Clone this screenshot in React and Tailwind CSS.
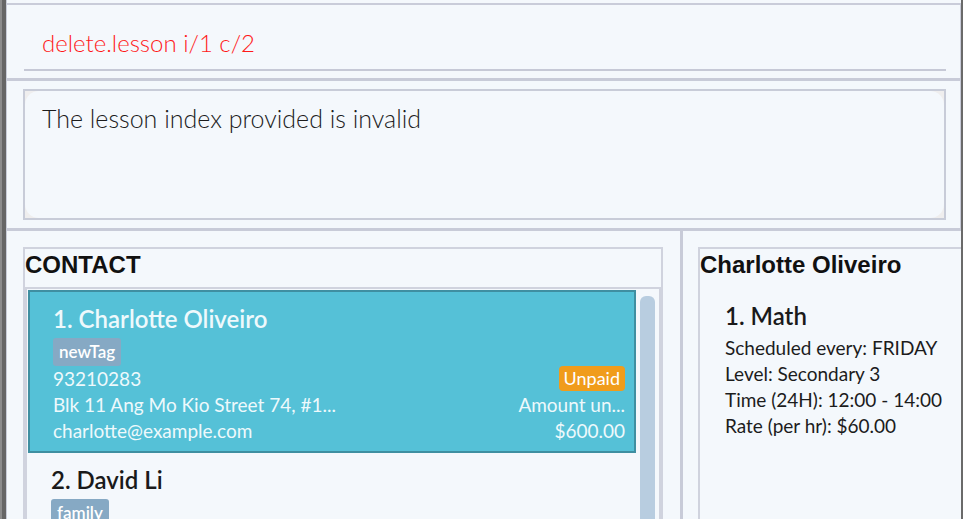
export default function App() {
  return (
    <div className="w-[963px] h-[519px] overflow-hidden flex bg-[#f4f8fc] font-['Lato',sans-serif] text-[#1c1c1c]">
      <div className="w-[6px] shrink-0 border-l-2 border-[#8c8c8c] bg-[#666666]" />

      <div className="flex-1 min-w-0 flex flex-col border-l border-[#c8ccd8]">
        <div className="h-[3px] shrink-0" />

        {/* command box */}
        <div className="shrink-0 border-t-2 border-r border-[#c9ccd9] pl-[17px] pr-[14px] pb-[7px]">
          <div className="h-[66px] pt-[11px] pl-[18px] flex items-center border-b-2 border-[#c6c9d6] text-[24px] font-light text-[#ff1a1a]">
            delete.lesson i/1 c/2
          </div>
        </div>

        {/* result box */}
        <div className="shrink-0 border-t-[3px] border-r border-[#c8cbd8] pl-[16px] pr-[14px] pt-[8px] pb-[8px]">
          <div className="h-[131px] border-2 border-[#c8ccd8] bg-[#efeeee]">
            <div className="h-full rounded-[14px] bg-[#f4f8fc] pl-[17px] pt-[11px] text-[25px] leading-[32px] font-light">
              The lesson index provided is invalid
            </div>
          </div>
        </div>

        {/* panels */}
        <div className="flex-1 min-h-0 flex border-t-[3px] border-[#c8cbd8]">
          <div className="w-[673px] shrink-0 pl-[16px] pr-[17px] pt-[16px] overflow-hidden">
            <div className="h-[400px] border-2 border-[#d0d3de] flex flex-col">
              <div className="pt-[2px] leading-[28px] h-[38px] text-[24px] font-bold font-['Liberation_Sans',sans-serif] text-[#111]">
                CONTACT
              </div>
              <div className="flex-1 border-2 border-[#d0d3de] flex pl-[1px] pt-[1px]">
                <div className="flex-1 min-w-0 flex flex-col">
                  <div className="border-2 border-[#3f8fa1] bg-[#55c1d7] pl-[23px] pr-[9px] pt-[12px] pb-[7px] flex text-[#eef9fc]">
                    <div className="flex-1 min-w-0 flex flex-col items-start">
                      <div className="h-[30px] leading-[30px] text-[24px] font-semibold">1. Charlotte Oliveiro</div>
                      <div className="mt-[4px] h-[28px] leading-[28px] px-[6px] rounded-[3px] bg-[#86a9c4] text-white text-[17px] font-semibold">newTag</div>
                      <div className="leading-[26px] text-[19px]">93210283</div>
                      <div className="leading-[26px] text-[19px]">Blk 11 Ang Mo Kio Street 74, #1...</div>
                      <div className="leading-[26px] text-[19px]">charlotte@example.com</div>
                    </div>
                    <div className="flex flex-col items-end justify-end">
                      <div className="h-[25px] mb-[1px] leading-[25px] px-[5px] rounded-[4px] bg-[#f09c1b] text-white text-[18px]">Unpaid</div>
                      <div className="leading-[26px] text-[19px]">Amount un...</div>
                      <div className="leading-[26px] text-[19px]">$600.00</div>
                    </div>
                  </div>
                  <div className="pl-[23px] pt-[12px] flex flex-col items-start">
                    <div className="h-[30px] leading-[30px] text-[24px] font-semibold text-[#1a1a1a]">2. David Li</div>
                    <div className="mt-[4px] h-[28px] leading-[28px] px-[6px] rounded-[3px] bg-[#86a9c4] text-white text-[17px] font-semibold">family</div>
                  </div>
                </div>
                <div className="w-[23px] shrink-0 pl-[4px] pr-[4px] pt-[6px]">
                  <div className="h-[300px] rounded-[6px] bg-[#b8cde0]" />
                </div>
              </div>
            </div>
          </div>

          <div className="w-[3px] shrink-0 bg-[#c8cbd8]" />

          <div className="flex-1 min-w-0 pl-[15px] pt-[16px] overflow-hidden">
            <div className="w-[320px] h-[400px] border-2 border-[#d0d3de]">
              <div className="pt-[2px] leading-[28px] h-[30px] text-[24px] font-bold font-['Liberation_Sans',sans-serif] text-[#111]">
                Charlotte Oliveiro
              </div>
              <div className="pl-[25px] mt-[22px]">
                <div className="h-[30px] mb-[4px] leading-[30px] text-[24px] font-semibold text-[#1a1a1a]">1. Math</div>
                <div className="leading-[26px] text-[19px]">Scheduled every: FRIDAY</div>
                <div className="leading-[26px] text-[19px]">Level: Secondary 3</div>
                <div className="leading-[26px] text-[19px]">Time (24H): 12:00 - 14:00</div>
                <div className="leading-[26px] text-[19px]">Rate (per hr): $60.00</div>
              </div>
            </div>
          </div>
        </div>
      </div>

      <div className="w-[2px] shrink-0 bg-[#6a6a6a]" />
    </div>
  );
}
